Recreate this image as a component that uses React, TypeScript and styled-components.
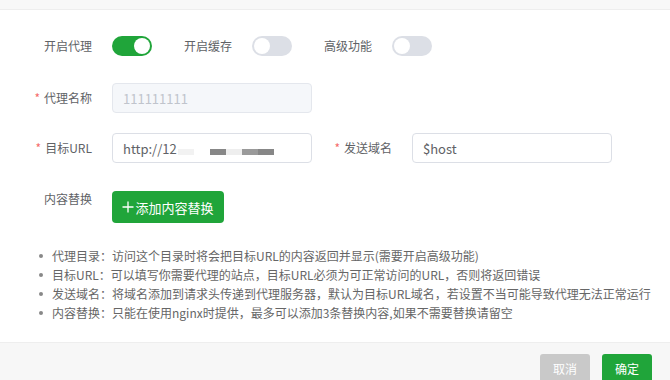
import React from "react";
import styled, { createGlobalStyle } from "styled-components";

const Global = createGlobalStyle`
  html, body { margin: 0; padding: 0; background: #fff; }
  body { font-family: "Microsoft YaHei", "Noto Sans CJK SC", sans-serif; }
  * { box-sizing: border-box; }
`;

const Page = styled.div`
  width: 670px;
  height: 380px;
  overflow: hidden;
  display: flex;
  flex-direction: column;
  background: #fff;
`;

const TopBand = styled.div`
  height: 10px;
  background: #f8f8f8;
  border-bottom: 1px solid #eeeeee;
  flex: none;
`;

const Body = styled.div`
  flex: 1;
  padding: 21px 0 0 12px;
  display: flex;
  flex-direction: column;
`;

const Row = styled.div<{ $mb?: number; $align?: string }>`
  display: flex;
  align-items: ${(p) => p.$align || "center"};
  min-height: 30px;
  margin-bottom: ${(p) => (p.$mb ?? 20)}px;
`;

const Label = styled.div<{ $top?: number }>`
  width: 100px;
  padding-right: 20px;
  text-align: right;
  font-size: 12px;
  color: #606266;
  line-height: 16px;
  padding-top: ${(p) => p.$top ?? 0}px;
  flex: none;
  white-space: nowrap;
`;

const Star = styled.span`
  color: #f56c6c;
  margin-right: 4px;
`;

const Toggle = styled.div<{ $on?: boolean }>`
  width: 40px;
  height: 20px;
  border-radius: 10px;
  background: ${(p) => (p.$on ? "#20a53a" : "#dcdfe6")};
  position: relative;
  flex: none;
  &::after {
    content: "";
    position: absolute;
    top: 2px;
    left: ${(p) => (p.$on ? "22px" : "2px")};
    width: 16px;
    height: 16px;
    border-radius: 50%;
    background: #fff;
  }
`;

const Input = styled.div<{ $disabled?: boolean }>`
  width: 200px;
  height: 30px;
  border: 1px solid ${(p) => (p.$disabled ? "#e4e7ed" : "#dcdfe6")};
  background: ${(p) => (p.$disabled ? "#f5f7fa" : "#fff")};
  color: ${(p) => (p.$disabled ? "#c0c4cc" : "#606266")};
  border-radius: 4px;
  padding: 0 10px;
  font-size: 13px;
  display: flex;
  align-items: center;
  flex: none;
  position: relative;
`;

const Mosaic = styled.span`
  display: inline-flex;
  align-items: center;
  margin-left: 1px;
  height: 6px;
  margin-top: 8px;
`;

const Block = styled.span<{ $c: string }>`
  display: inline-block;
  width: 16px;
  height: 6px;
  background: ${(p) => p.$c};
`;

const AddButton = styled.button`
  width: 112px;
  height: 32px;
  border: none;
  border-radius: 4px;
  background: #20a53a;
  color: #fff;
  font-family: inherit;
  font-size: 13px;
  padding: 0;
  display: flex;
  align-items: center;
  justify-content: center;
  gap: 1px;
`;

const Tips = styled.ul`
  margin: 0;
  padding: 0 0 0 40px;
  list-style: none;
  font-size: 12px;
  line-height: 19px;
  color: #666;
  margin-top: 1px;
`;

const Tip = styled.li`
  position: relative;
  white-space: nowrap;
  &::before {
    content: "";
    position: absolute;
    left: -13px;
    top: 8px;
    width: 4px;
    height: 4px;
    border-radius: 50%;
    background: #888;
  }
`;

const Footer = styled.div`
  height: 38px;
  flex: none;
  background: #f7f7f7;
  border-top: 1px solid #eeeeee;
  display: flex;
  justify-content: flex-end;
  align-items: flex-start;
  padding: 11px 18px 0 0;
  gap: 12px;
`;

const FootButton = styled.button<{ $primary?: boolean }>`
  width: 50px;
  height: 30px;
  border: none;
  border-radius: 3px;
  background: ${(p) => (p.$primary ? "#20a53a" : "#c9c9c9")};
  color: #fff;
  font-family: inherit;
  font-size: 12px;
  padding: 0;
  line-height: 30px;
`;

function Plus() {
  return (
    <svg width="12" height="12" viewBox="0 0 12 12">
      <path d="M6 0.5V11.5M0.5 6H11.5" stroke="#fff" strokeWidth="1.3" fill="none" />
    </svg>
  );
}

export default function App() {
  return (
    <Page>
      <Global />
      <TopBand />
      <Body>
        <Row $mb={22}>
          <Label>开启代理</Label>
          <Toggle $on />
          <Label>开启缓存</Label>
          <Toggle />
          <Label>高级功能</Label>
          <Toggle />
        </Row>
        <Row>
          <Label>
            <Star>*</Star>代理名称
          </Label>
          <Input $disabled>111111111</Input>
        </Row>
        <Row $mb={28}>
          <Label>
            <Star>*</Star>目标URL
          </Label>
          <Input>
            http://12
            <Mosaic>
              <Block $c="#f2f2f2" />
              <Block $c="transparent" />
              <Block $c="#878787" />
              <Block $c="#eeeeee" />
              <Block $c="#9a9a9a" />
              <Block $c="#878787" />
            </Mosaic>
          </Input>
          <Label>
            <Star>*</Star>发送域名
          </Label>
          <Input>$host</Input>
        </Row>
        <Row $align="flex-start" $mb={22}>
          <Label $top={0}>内容替换</Label>
          <AddButton>
            <Plus />
            添加内容替换
          </AddButton>
        </Row>
        <Tips>
          <Tip>代理目录：访问这个目录时将会把目标URL的内容返回并显示(需要开启高级功能)</Tip>
          <Tip>目标URL：可以填写你需要代理的站点，目标URL必须为可正常访问的URL，否则将返回错误</Tip>
          <Tip>发送域名：将域名添加到请求头传递到代理服务器，默认为目标URL域名，若设置不当可能导致代理无法正常运行</Tip>
          <Tip>内容替换：只能在使用nginx时提供，最多可以添加3条替换内容,如果不需要替换请留空</Tip>
        </Tips>
      </Body>
      <Footer>
        <FootButton>取消</FootButton>
        <FootButton $primary>确定</FootButton>
      </Footer>
    </Page>
  );
}
